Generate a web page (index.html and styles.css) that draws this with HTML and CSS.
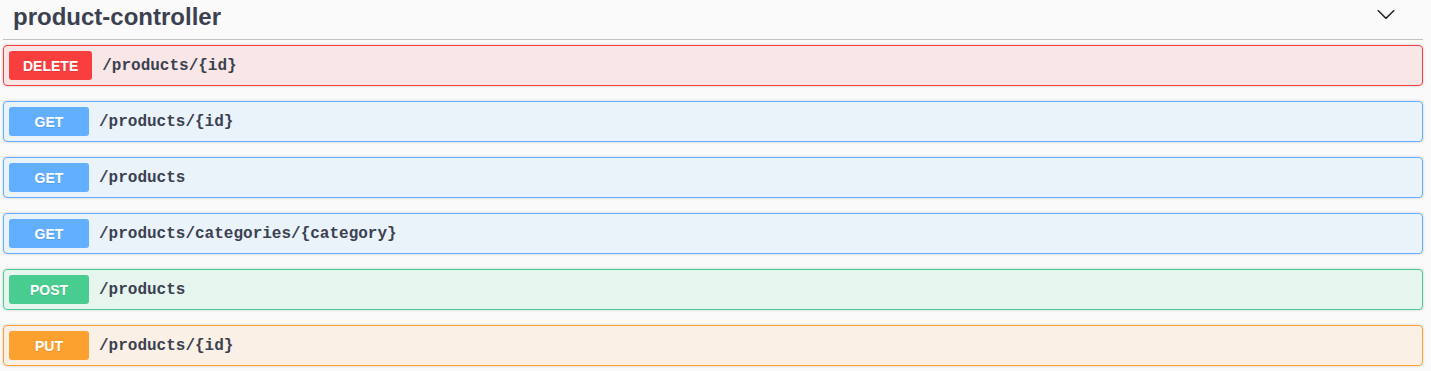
FILE: index.html
```html
<html>
    <head>
        <title>
            product-controller
        </title>
        <link rel="stylesheet" href="styles.css">
    </head>
    <body>
        <div class="tag-section">
            <h3 class="tag-header">
                <span class="tag-name">product-controller</span>
                <button class="expand-btn" aria-label="Collapse">
                    <svg width="20" height="20" viewBox="0 0 20 20">
                        <path d="M17.418 6.109c.272-.268.709-.268.979 0s.271.701 0 .969l-7.908 7.830c-.27.268-.707.268-.979 0l-7.908-7.830c-.27-.268-.27-.701 0-.969.271-.268.709-.268.979 0L10 13.250l7.418-7.141z"/>
                    </svg>
                </button>
            </h3>
            <div class="op op-delete">
                <span class="method">DELETE</span>
                <span class="path">/products/{id}</span>
            </div>
            <div class="op op-get">
                <span class="method">GET</span>
                <span class="path">/products/{id}</span>
            </div>
            <div class="op op-get">
                <span class="method">GET</span>
                <span class="path">/products</span>
            </div>
            <div class="op op-get">
                <span class="method">GET</span>
                <span class="path">/products/categories/{category}</span>
            </div>
            <div class="op op-post">
                <span class="method">POST</span>
                <span class="path">/products</span>
            </div>
            <div class="op op-put">
                <span class="method">PUT</span>
                <span class="path">/products/{id}</span>
            </div>
        </div>
    </body>
</html>
```

FILE: styles.css
```css
body {
    margin: 0;
    background-color: #fafafa;
    font-family: "Liberation Sans", Arial, sans-serif;
}
.tag-section {
    padding: 0 8px 0 3px;
}
.tag-header {
    display: flex;
    align-items: center;
    margin: 0 0 5px 0;
    padding: 3px 0 8px 10px;
    height: 28px;
    border-bottom: 1px solid rgba(59, 65, 81, 0.3);
    font-size: 24px;
    font-weight: bold;
    color: #3b4151;
}
.tag-name {
    flex: 1;
    line-height: 28px;
}
.expand-btn {
    border: none;
    background: none;
    padding: 0;
    margin: 1px 27px 0 0;
    width: 20px;
    height: 20px;
    align-self: flex-start;
}
.expand-btn svg {
    display: block;
    fill: #222;
}
.op {
    display: flex;
    align-items: center;
    padding: 5px;
    margin: 0 0 15px 0;
    border: 1px solid;
    border-radius: 4px;
    box-shadow: 0 0 3px rgba(0, 0, 0, 0.19);
}
.method {
    min-width: 80px;
    box-sizing: border-box;
    padding: 7px 14px 5px 14px;
    border-radius: 3px;
    text-align: center;
    font-size: 14px;
    line-height: 17px;
    font-weight: bold;
    color: #fff;
    text-shadow: 0 1px 0 rgba(0, 0, 0, 0.1);
}
.path {
    padding: 1px 10px 0 10px;
    font-family: "Liberation Mono", "Courier New", monospace;
    font-size: 16px;
    font-weight: 600;
    color: #3b4151;
}
.op-delete {
    background-color: rgba(249, 62, 62, 0.1);
    border-color: #f93e3e;
}
.op-delete .method {
    background-color: #f93e3e;
}
.op-get {
    background-color: rgba(97, 175, 254, 0.1);
    border-color: #61affe;
}
.op-get .method {
    background-color: #61affe;
}
.op-post {
    background-color: rgba(73, 204, 144, 0.1);
    border-color: #49cc90;
}
.op-post .method {
    background-color: #49cc90;
}
.op-put {
    background-color: rgba(252, 161, 48, 0.1);
    border-color: #fca130;
}
.op-put .method {
    background-color: #fca130;
}
```
